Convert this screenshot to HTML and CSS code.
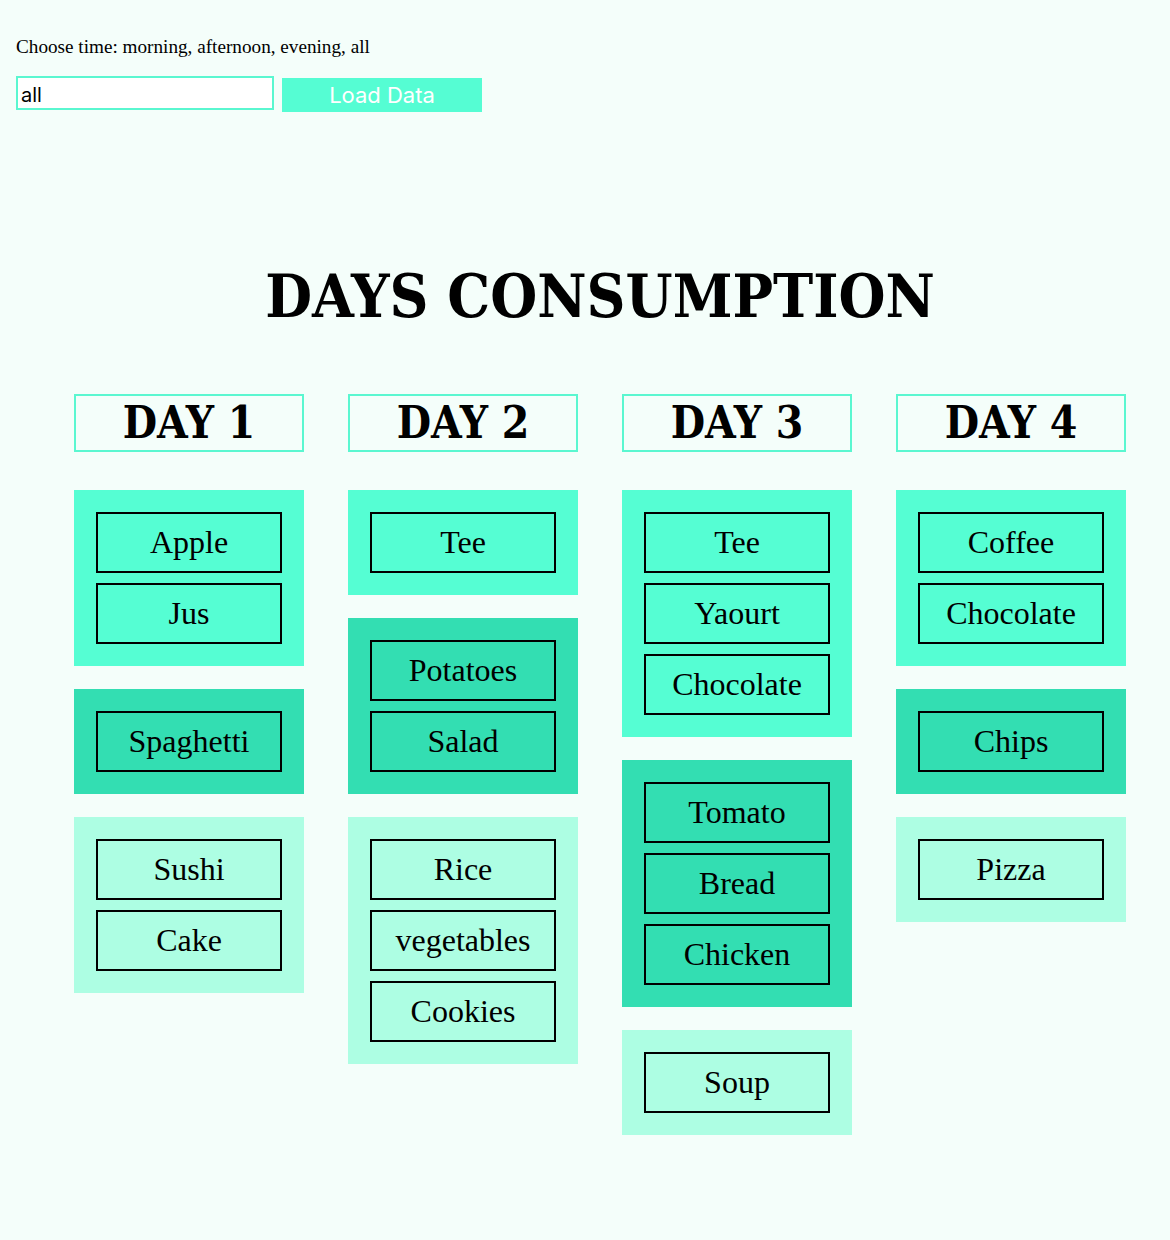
FILE: index.html
```html
<!DOCTYPE html>
<html>
<head>
<meta charset="utf-8">
<title>Days Consumption</title>
<link rel="stylesheet" href="styles.css">
</head>
<body>
<div class="controls">
  <p class="prompt">Choose time: morning, afternoon, evening, all</p>
  <div class="control-row">
    <input class="time-input" type="text" value="all">
    <button class="load-btn" type="button">Load Data</button>
  </div>
</div>

<main class="board">
  <h1 class="title">DAYS CONSUMPTION</h1>
  <div class="days">
    <section class="day">
      <h2 class="day-title">DAY 1</h2>
      <div class="group morning">
        <div class="item">Apple</div>
        <div class="item">Jus</div>
      </div>
      <div class="group afternoon">
        <div class="item">Spaghetti</div>
      </div>
      <div class="group evening">
        <div class="item">Sushi</div>
        <div class="item">Cake</div>
      </div>
    </section>

    <section class="day">
      <h2 class="day-title">DAY 2</h2>
      <div class="group morning">
        <div class="item">Tee</div>
      </div>
      <div class="group afternoon">
        <div class="item">Potatoes</div>
        <div class="item">Salad</div>
      </div>
      <div class="group evening">
        <div class="item">Rice</div>
        <div class="item">vegetables</div>
        <div class="item">Cookies</div>
      </div>
    </section>

    <section class="day">
      <h2 class="day-title">DAY 3</h2>
      <div class="group morning">
        <div class="item">Tee</div>
        <div class="item">Yaourt</div>
        <div class="item">Chocolate</div>
      </div>
      <div class="group afternoon">
        <div class="item">Tomato</div>
        <div class="item">Bread</div>
        <div class="item">Chicken</div>
      </div>
      <div class="group evening">
        <div class="item">Soup</div>
      </div>
    </section>

    <section class="day">
      <h2 class="day-title">DAY 4</h2>
      <div class="group morning">
        <div class="item">Coffee</div>
        <div class="item">Chocolate</div>
      </div>
      <div class="group afternoon">
        <div class="item">Chips</div>
      </div>
      <div class="group evening">
        <div class="item">Pizza</div>
      </div>
    </section>
  </div>
</main>
</body>
</html>
```
FILE: styles.css
```css
html, body {
  margin: 0;
  padding: 0;
  background: #f4fefa;
}

body {
  font-family: "Liberation Serif", "Times New Roman", serif;
  color: #000;
}

.controls {
  padding: 36px 16px 0;
}

.prompt {
  margin: 0 0 19px;
  font-size: 19.2px;
  line-height: 21px;
}

.control-row {
  display: flex;
  align-items: flex-start;
  gap: 8px;
}

.time-input {
  box-sizing: border-box;
  width: 258px;
  height: 34px;
  margin: 0;
  padding: 3px 3px 0;
  border: 2px solid #5af7d0;
  background: #ffffff;
  font-family: Inter, "Liberation Sans", Arial, sans-serif;
  font-size: 20px;
  color: #000;
  outline: none;
}

.load-btn {
  box-sizing: border-box;
  width: 200px;
  height: 34px;
  margin: 2px 0 0;
  padding: 0;
  border: none;
  background: #55fdd3;
  color: #ffffff;
  font-family: Inter, "Liberation Sans", sans-serif;
  font-size: 22px;
  line-height: 34px;
  cursor: pointer;
}

.board {
  width: 1052px;
  margin-left: 74px;
  padding-top: 149px;
}

.title {
  margin: 0 0 63px;
  text-align: center;
  font-family: "DejaVu Serif Condensed", "DejaVu Serif", serif;
  font-stretch: condensed;
  font-weight: bold;
  font-size: 60px;
  line-height: 70px;
}

.days {
  display: flex;
  align-items: flex-start;
  gap: 44px;
}

.day {
  width: 230px;
  display: flex;
  flex-direction: column;
}

.day-title {
  box-sizing: border-box;
  height: 58px;
  margin: 0 0 38px;
  border: 2px solid #5af7d0;
  text-align: center;
  font-family: "DejaVu Serif Condensed", "DejaVu Serif", serif;
  font-stretch: condensed;
  font-weight: bold;
  font-size: 44px;
  line-height: 54px;
}

.group {
  padding: 22px;
  margin-bottom: 23px;
  display: flex;
  flex-direction: column;
  gap: 10px;
}

.morning { background: #55fed3; }
.afternoon { background: #33deb2; }
.evening { background: #adfee3; }

.item {
  border: 2px solid #000;
  padding: 10px 0;
  text-align: center;
  font-size: 32px;
}
```
